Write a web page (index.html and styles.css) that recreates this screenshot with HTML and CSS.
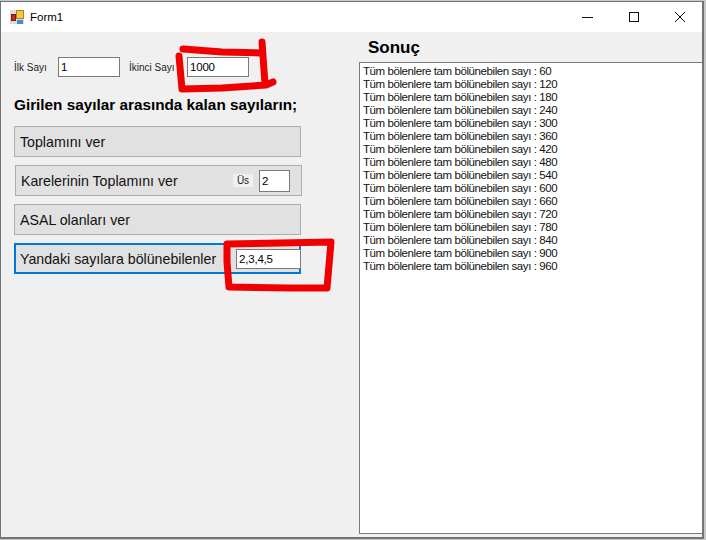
FILE: index.html
```html
<!DOCTYPE html>
<html lang="tr">
<head>
<meta charset="utf-8">
<title>Form1</title>
<link rel="stylesheet" href="styles.css">
</head>
<body>
<div class="window">
  <header class="titlebar">
    <svg class="appicon" width="14" height="14" viewBox="0 0 14 14">
      <rect x="0" y="0" width="14" height="14" fill="#dcdcdc"/>
      <rect x="6.5" y="0.5" width="7" height="8" fill="#f5c53c" stroke="#a8842a"/>
      <rect x="1.5" y="4.5" width="4" height="6" fill="#c8281e" stroke="#7a1a14"/>
      <rect x="7" y="10" width="6" height="4" fill="#4d86d6"/>
    </svg>
    <span class="title">Form1</span>
    <div class="controls">
      <svg class="ctl" width="12" height="12" viewBox="0 0 12 12"><path d="M0 6.5H11" stroke="#111" fill="none"/></svg>
      <svg class="ctl" width="12" height="12" viewBox="0 0 12 12"><rect x="1.5" y="1.5" width="9" height="9" stroke="#111" fill="none"/></svg>
      <svg class="ctl" width="12" height="12" viewBox="0 0 12 12"><path d="M1 1L11 11M11 1L1 11" stroke="#111" fill="none"/></svg>
    </div>
  </header>
  <main class="client">
    <section class="left">
      <div class="inputs">
        <label class="lbl lbl-first">İlk Sayı</label>
        <input class="tb tb-first" value="1">
        <label class="lbl lbl-second">İkinci Sayı</label>
        <input class="tb" value="1000">
      </div>
      <h2 class="heading">Girilen sayılar arasında kalan sayıların;</h2>
      <div class="btn">Toplamını ver</div>
      <div class="btn btn-shift">Karelerinin Toplamını ver
        <span class="us">Üs</span>
        <input class="tb tb-us" value="2">
      </div>
      <div class="btn">ASAL olanları ver</div>
      <div class="btn btn-active">Yandaki sayılara bölünebilenler
        <input class="tb tb-div" value="2,3,4,5">
      </div>
    </section>
    <section class="right">
      <h2 class="sonuc">Sonuç</h2>
      <div class="output">
        <div>Tüm bölenlere tam bölünebilen sayı : 60</div>
        <div>Tüm bölenlere tam bölünebilen sayı : 120</div>
        <div>Tüm bölenlere tam bölünebilen sayı : 180</div>
        <div>Tüm bölenlere tam bölünebilen sayı : 240</div>
        <div>Tüm bölenlere tam bölünebilen sayı : 300</div>
        <div>Tüm bölenlere tam bölünebilen sayı : 360</div>
        <div>Tüm bölenlere tam bölünebilen sayı : 420</div>
        <div>Tüm bölenlere tam bölünebilen sayı : 480</div>
        <div>Tüm bölenlere tam bölünebilen sayı : 540</div>
        <div>Tüm bölenlere tam bölünebilen sayı : 600</div>
        <div>Tüm bölenlere tam bölünebilen sayı : 660</div>
        <div>Tüm bölenlere tam bölünebilen sayı : 720</div>
        <div>Tüm bölenlere tam bölünebilen sayı : 780</div>
        <div>Tüm bölenlere tam bölünebilen sayı : 840</div>
        <div>Tüm bölenlere tam bölünebilen sayı : 900</div>
        <div>Tüm bölenlere tam bölünebilen sayı : 960</div>
      </div>
    </section>
  </main>
</div>
<svg class="marks" width="706" height="540" viewBox="0 0 706 540">
  <path d="M183 49L222 52L262 53M262 42L265 84M273 82L266 85L222 88L182 89L179 56" fill="none" stroke="#f00000" stroke-width="7" stroke-linecap="round" stroke-linejoin="round"/>
  <path d="M227 244L280 243L331 242L327 288L290 288L229 287L227 262L227 244" fill="none" stroke="#f00000" stroke-width="7" stroke-linecap="round" stroke-linejoin="round"/>
</svg>
</body>
</html>
```
FILE: styles.css
```css
* { box-sizing: border-box; }
html, body { margin: 0; height: 100%; }
body {
  width: 706px;
  height: 540px;
  overflow: hidden;
  background: #c8c8c8;
  padding: 1px 2px 1px 0;
  font-family: "Liberation Sans", Arial, sans-serif;
  color: #000;
}
.window {
  width: 704px;
  height: 538px;
  border: 1px solid #6f7478;
  border-width: 1px 2px 2px 1px;
  background: #f0f0f0;
  display: flex;
  flex-direction: column;
}
.titlebar {
  height: 30px;
  background: #fff;
  display: flex;
  align-items: center;
  padding-left: 9px;
  flex: none;
}
.appicon { flex: none; }
.title { font-size: 11.5px; margin-left: 6px; }
.controls { margin-left: auto; display: flex; gap: 34px; padding-right: 16px; align-items: center; }
.client { flex: 1; display: flex; min-height: 0; }
.left { width: 358px; padding: 25px 0 0 13px; flex: none; }
.inputs { display: flex; align-items: center; height: 20px; }
.lbl { font-size: 10px; color: #222; }
.lbl-first { width: 44px; }
.lbl-second { margin-left: 9px; width: 58px; }
.tb {
  width: 62px;
  height: 20px;
  border: 1px solid #7a7a7a;
  background: #fff;
  font: 11.5px "Liberation Sans", Arial, sans-serif;
  letter-spacing: -0.2px;
  color: #000;
  padding: 0 2px;
  outline: none;
}
.heading {
  font-size: 15.3px;
  font-weight: 700;
  margin: 19px 0 12px;
  line-height: 18px;
  white-space: nowrap;
}
.btn {
  width: 287px;
  height: 31px;
  background: #e1e1e1;
  border: 1px solid #adadad;
  font-size: 14.2px;
  padding-left: 5px;
  color: #111;
  display: flex;
  align-items: center;
  margin-bottom: 8px;
  position: relative;
}
.btn-shift { margin-left: 1px; }
.btn-active { border: 2px solid #0078d7; padding-left: 4px; }
.us {
  margin-left: auto;
  background: #f0f0f0;
  font-size: 10px;
  width: 20px;
  text-align: center;
  height: 13px;
  line-height: 13px;
  color: #222;
}
.tb-us { width: 31px; height: 22px; margin: 0 11px 0 6px; }
.tb-div {
  position: absolute;
  right: -2px;
  top: 4px;
  width: 65px;
  height: 20px;
}
.right { flex: 1; min-width: 0; display: flex; flex-direction: column; }
.sonuc {
  font-size: 17px;
  font-weight: 700;
  margin: 6px 0 0 9px;
  height: 24px;
  line-height: 20px;
}
.output {
  width: 344px;
  height: 472px;
  background: #fff;
  border: 1px solid #7a7a7a;
  padding: 2px 0 0 3px;
  font-size: 11.5px;
  letter-spacing: -0.42px;
  line-height: 13px;
  color: #111;
  white-space: nowrap;
}
.marks { position: absolute; left: 0; top: 0; pointer-events: none; }
```
